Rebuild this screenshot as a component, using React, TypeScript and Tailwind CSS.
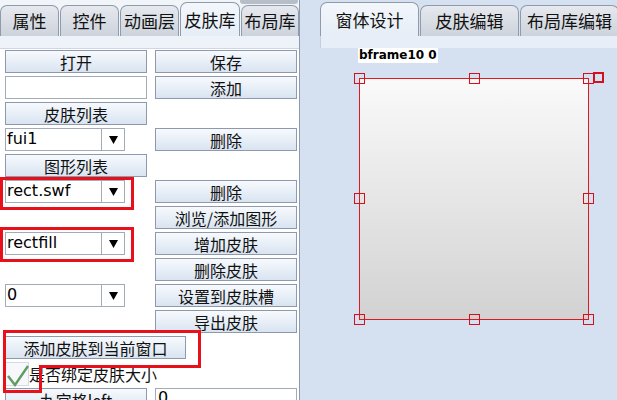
import React from 'react';

const cjk = { fontFamily: '"Noto Sans CJK SC", "Noto Sans", sans-serif' };
const latin = { fontFamily: '"DejaVu Sans", "Noto Sans CJK SC", sans-serif' };

function Btn({ label, className = '' }: { label: string; className?: string }) {
  return (
    <div
      className={`flex items-center justify-center border border-[#8e9aab] bg-gradient-to-b from-[#f7fafd] to-[#d9e4f1] text-[16px] leading-none text-[#111] ${className}`}
      style={cjk}
    >
      {label}
    </div>
  );
}

function Combo({ value }: { value: string }) {
  return (
    <div className="flex w-[120px] border border-[#a3abb7] bg-white">
      <div className="flex-1 px-[1px] pt-[1px] text-[16px] leading-[18px] text-black" style={latin}>
        {value}
      </div>
      <div className="flex w-[23px] items-center justify-center border-l border-[#a3abb7]">
        <svg width="9" height="8" viewBox="0 0 9 8">
          <path d="M0 0 H9 L4.5 8 Z" fill="#000" />
        </svg>
      </div>
    </div>
  );
}

function Tab({ label, active, w }: { label: string; active?: boolean; w: string }) {
  return (
    <div
      className={`flex items-center justify-center rounded-t-[7px] border border-b-0 border-[#8f9bab] text-[17px] text-[#111] ${w} ${
        active
          ? 'h-[34px] bg-gradient-to-b from-[#f3f7fc] to-[#e6edf6]'
          : 'h-[31px] bg-gradient-to-b from-[#e6e9ee] to-[#cdd3dc]'
      }`}
      style={cjk}
    >
      {label}
    </div>
  );
}

function Handle({ x, y, thick }: { x: number; y: number; thick?: boolean }) {
  return (
    <div
      className={`absolute h-[11px] w-[11px] ${thick ? 'border-2' : 'border-[1.5px]'} border-[#d4101c]`}
      style={{ left: x, top: y }}
    />
  );
}

export default function App() {
  return (
    <div className="relative flex h-[400px] w-[617px] overflow-hidden bg-[#d5e1f1]">
      {/* left panel */}
      <div className="flex w-[300px] shrink-0 flex-col border-r border-[#8d9bb0] bg-[#f1f5fa]">
        <div className="relative flex h-[36px] shrink-0 items-end gap-[1px]">
          <div className="absolute right-[1px] top-0 h-[4px] w-[58px] rounded-b-[3px] bg-[#b8bec7]" />
          <Tab label="属性" w="w-[59px]" />
          <Tab label="控件" w="w-[59px]" />
          <Tab label="动画层" w="w-[59px]" />
          <Tab label="皮肤库" w="w-[60px]" active />
          <Tab label="布局库" w="w-[58px]" />
        </div>
        <div className="h-[12px] shrink-0 bg-[#eef3f9]" />
        <div className="min-h-0 flex-1 overflow-hidden border-t border-[#cdd6e2] bg-white">
          <div className="grid grid-cols-[142px_142px] auto-rows-[23px] gap-x-[8px] gap-y-[3px] px-[5px] pt-[1px]">
            <Btn label="打开" />
            <Btn label="保存" />
            <div className="border border-[#a3abb7] bg-white" />
            <Btn label="添加" />
            <Btn label="皮肤列表" />
            <div />
            <Combo value="fui1" />
            <Btn label="删除" />
            <Btn label="图形列表" />
            <div />
            <Combo value="rect.swf" />
            <Btn label="删除" />
            <div />
            <Btn label="浏览/添加图形" />
            <Combo value="rectfill" />
            <Btn label="增加皮肤" />
            <div />
            <Btn label="删除皮肤" />
            <Combo value="0" />
            <Btn label="设置到皮肤槽" />
            <div />
            <Btn label="导出皮肤" />
            <Btn label="添加皮肤到当前窗口" className="w-[181px]" />
            <div />
            <div className="col-span-2 flex items-center">
              <div className="relative h-[24px] w-[24px] border border-[#d5dbe3] bg-[#f6f8fb]">
                <svg className="absolute left-[1px] top-[2px]" width="22" height="22" viewBox="0 0 22 22">
                  <path d="M1 11 L8 20 L21 1" fill="none" stroke="#5f9c60" strokeWidth="2.4" />
                </svg>
              </div>
              <span className="text-[16px] leading-none text-[#111]" style={cjk}>
                是否绑定皮肤大小
              </span>
            </div>
            <Btn label="九宫格left" />
            <div className="border border-[#a3abb7] bg-white px-[2px] text-[16px] leading-[18px] text-black" style={latin}>
              0
            </div>
          </div>
        </div>
      </div>

      {/* red annotation boxes */}
      <div className="absolute left-0 top-[177px] h-[33px] w-[134px] border-[3px] border-[#e8101a]" />
      <div className="absolute left-0 top-[227px] h-[35px] w-[134px] border-[3px] border-[#e8101a]" />
      <svg className="absolute left-0 top-[328px]" width="202" height="66" viewBox="0 0 202 66">
        <path d="M4.5 3.5 H199.5 V38.5 H40.5 V63.5 H4.5 Z" fill="none" stroke="#e8101a" strokeWidth="3" />
      </svg>

      {/* right panel */}
      <div className="flex flex-1 flex-col">
        <div className="flex h-[36px] shrink-0 items-end gap-[1px] pl-[20px]">
          <Tab label="窗体设计" w="w-[99px]" active />
          <Tab label="皮肤编辑" w="w-[99px]" />
          <Tab label="布局库编辑" w="w-[99px]" />
        </div>
        <div className="ml-[20px] h-[12px] shrink-0 border-l border-[#c3cfde] bg-[#e7eef7]" />
        <div className="relative flex-1">
          <div
            className="absolute left-[58px] top-0 bg-white px-[1px] text-[12px] font-bold leading-[15px] text-black"
            style={latin}
          >
            bframe10 0
          </div>
          <div className="absolute left-[59px] top-[30px] h-[242px] w-[230px] border border-[#e01820] bg-gradient-to-b from-[#fafafa] to-[#d2d2d2]">
            <Handle x={-6} y={-6} />
            <Handle x={109} y={-6} />
            <Handle x={223} y={-6} />
            <Handle x={233} y={-7} thick />
            <Handle x={-6} y={114} />
            <Handle x={223} y={114} />
            <Handle x={-6} y={235} />
            <Handle x={109} y={235} />
            <Handle x={223} y={235} />
          </div>
        </div>
      </div>
    </div>
  );
}
